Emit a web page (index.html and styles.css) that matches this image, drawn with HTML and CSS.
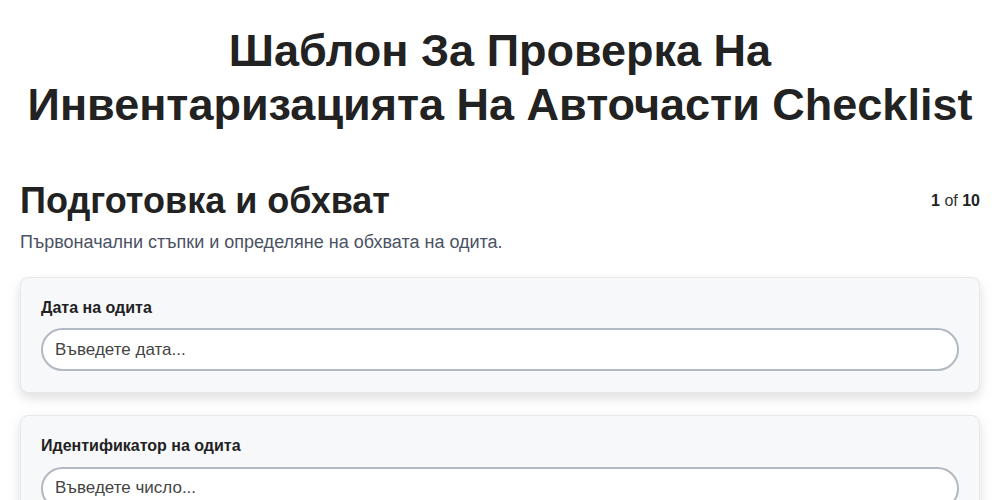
FILE: index.html
```html
<!DOCTYPE html>
<html lang="bg">
<head>
<meta charset="UTF-8">
<meta name="viewport" content="width=device-width, initial-scale=1.0">
<title>Шаблон За Проверка На Инвентаризацията На Авточасти Checklist</title>
<link rel="stylesheet" href="styles.css">
</head>
<body>
    <div class="container">
        <h1>Шаблон За Проверка На Инвентаризацията На Авточасти Checklist</h1>

        <div class="section-header">
            <h2>Подготовка и обхват</h2>
            <div class="step-count"><b>1</b> of <b>10</b></div>
        </div>
        <p class="section-desc">Първоначални стъпки и определяне на обхвата на одита.</p>

        <div class="field-card">
            <label for="auditDate">Дата на одита</label>
            <input type="text" id="auditDate" placeholder="Въведете дата...">
        </div>

        <div class="field-card">
            <label for="auditId">Идентификатор на одита</label>
            <input type="number" id="auditId" placeholder="Въведете число...">
        </div>

        <div class="field-card">
            <label for="auditor">Одитор</label>
            <input type="text" id="auditor" placeholder="Въведете име...">
        </div>
    </div>
</body>
</html>
```

FILE: styles.css
```css
body {
    font-family: "Liberation Sans", Arial, sans-serif;
    margin: 0;
    background-color: #fff;
    color: #222;
}
.container {
    padding: 24px 20px 20px;
}
h1 {
    font-size: 45px;
    line-height: 1.2;
    text-align: center;
    margin: 0 0 47px;
    color: #222;
}
.section-header {
    display: flex;
    justify-content: space-between;
    align-items: center;
}
.section-header h2 {
    font-size: 36px;
    line-height: 1.2;
    margin: 0;
    color: #222;
}
.step-count {
    font-size: 16px;
    line-height: 1.2;
    color: #333;
}
.step-count b {
    color: #222;
}
.section-desc {
    font-size: 18px;
    line-height: 27px;
    color: #4a5263;
    margin: 7px 0 21px;
}
.field-card {
    background-color: #f7f8fa;
    border: 1px solid #e6e8ec;
    border-radius: 8px;
    box-shadow: 0 5px 12px rgba(0, 0, 0, 0.13);
    padding: 20px 20px 21px;
    margin-bottom: 22px;
}
.field-card label {
    display: block;
    font-size: 16px;
    font-weight: bold;
    line-height: 1.2;
    margin-bottom: 11px;
    color: #222;
}
.field-card input {
    display: block;
    width: 100%;
    box-sizing: border-box;
    font-family: inherit;
    font-size: 17px;
    line-height: 20px;
    padding: 9.5px 12px;
    border: 2px solid #b2b9c2;
    border-radius: 22px;
    background-color: #fff;
    color: #222;
    outline: none;
}
.field-card input::placeholder {
    color: #444;
}
```
